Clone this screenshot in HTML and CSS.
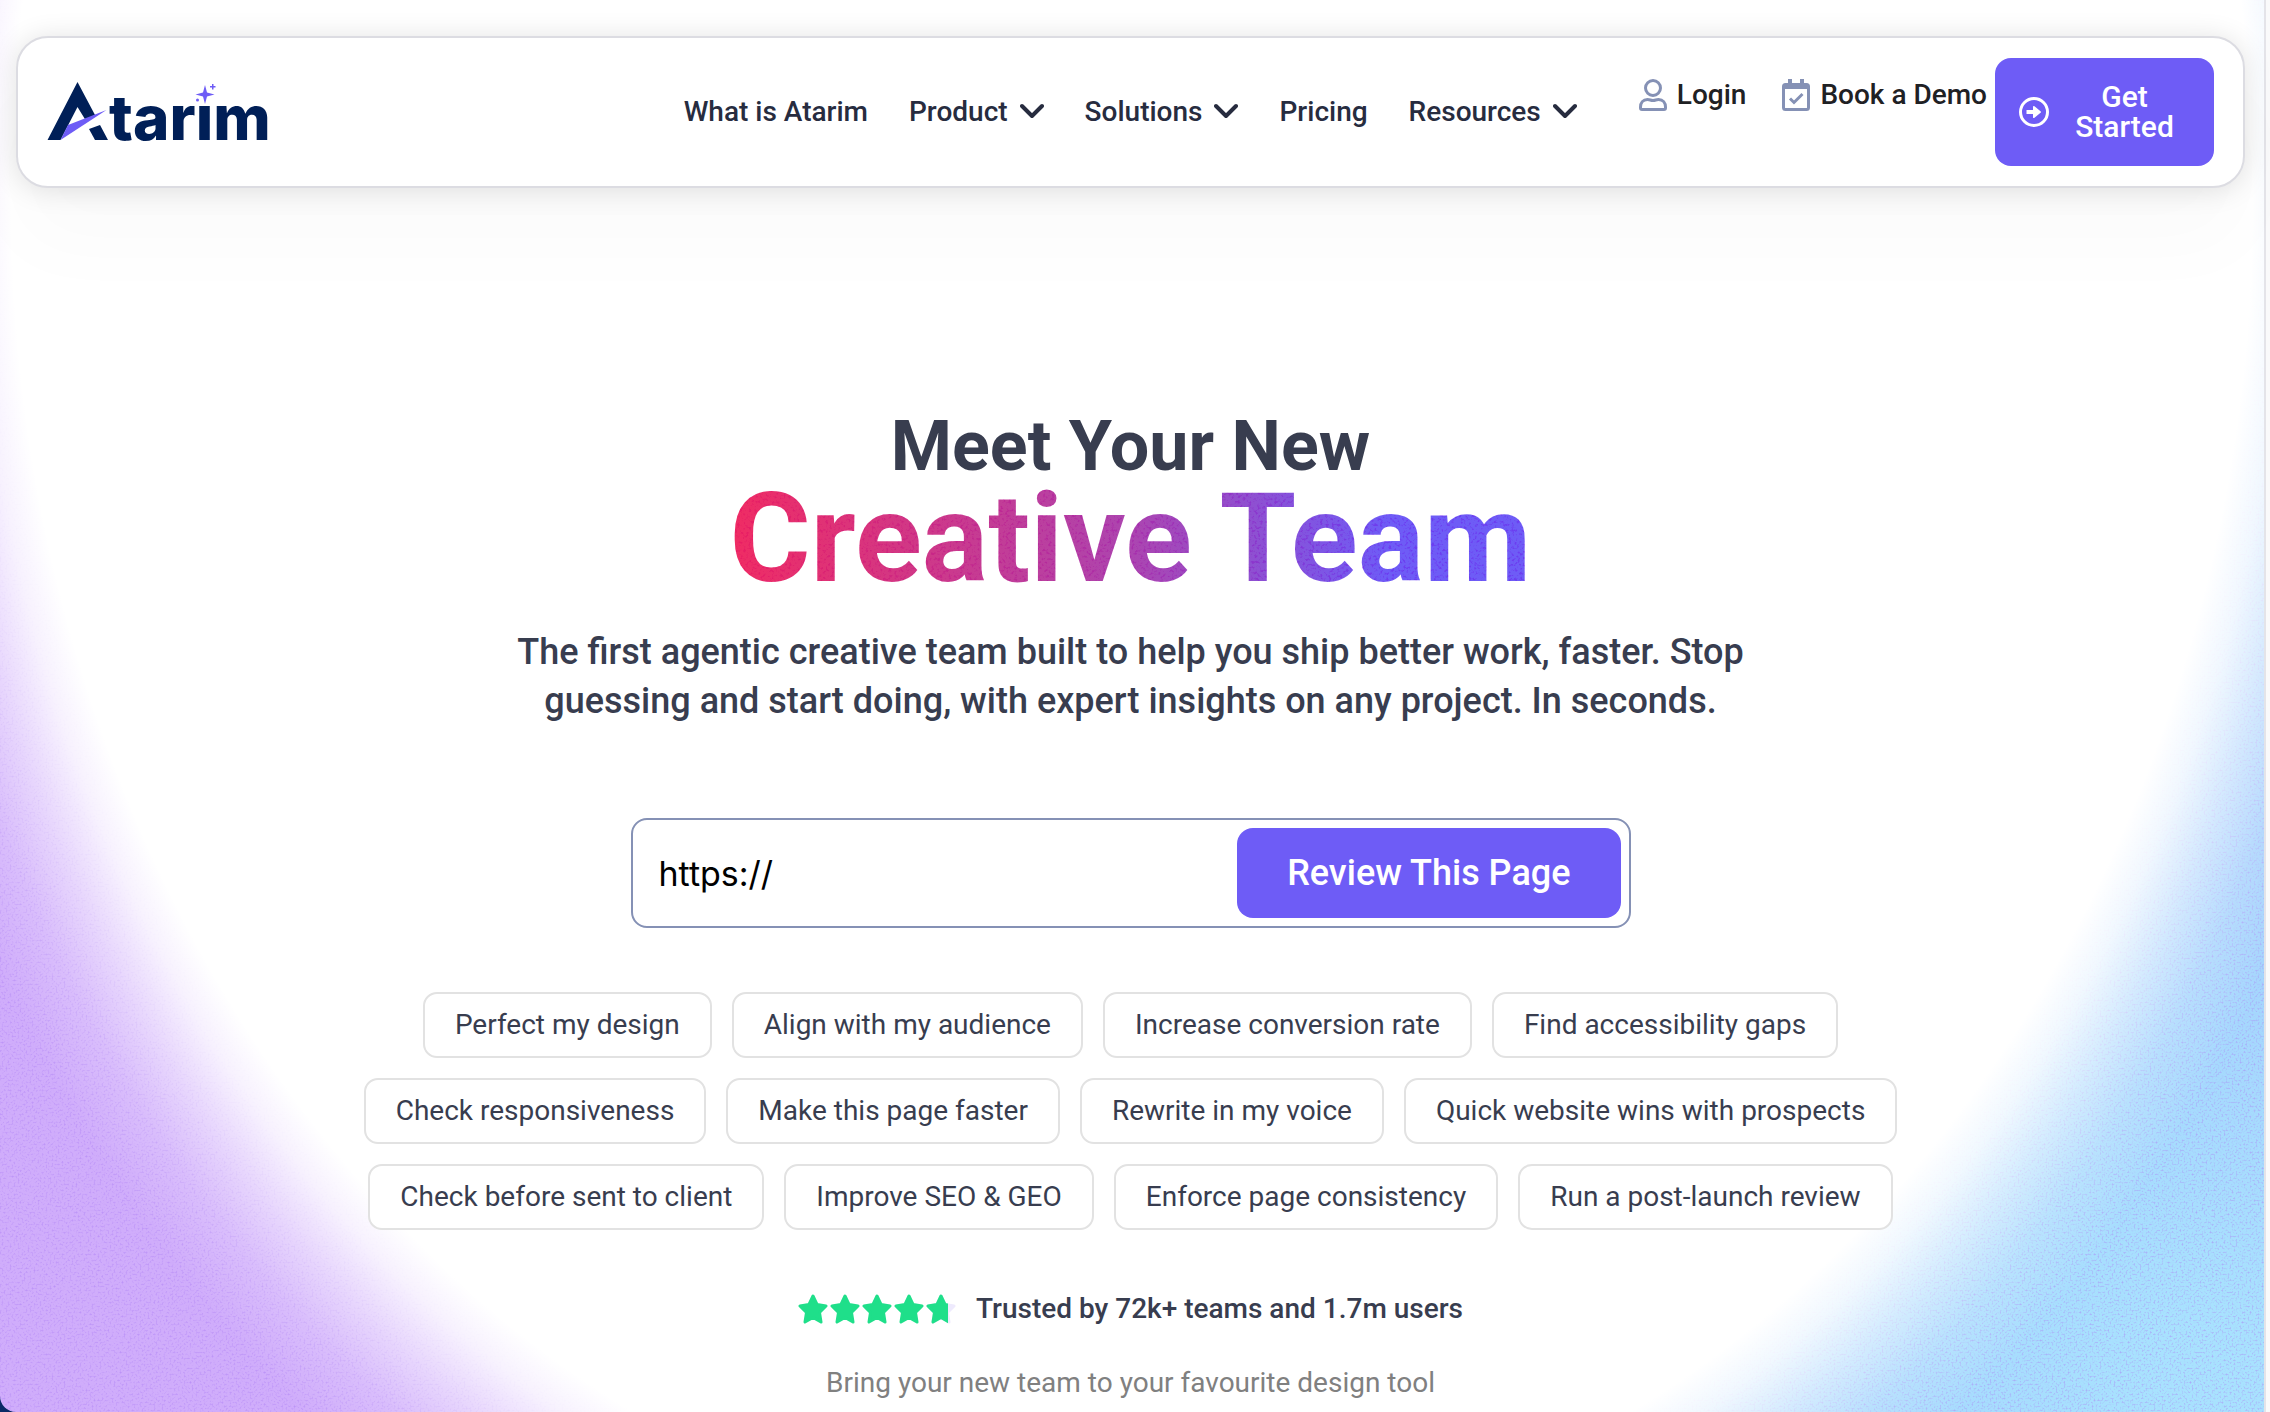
FILE: index.html
```html
<!DOCTYPE html>
<html lang="en">
<head>
  <meta charset="UTF-8" />
  <meta name="viewport" content="width=device-width, initial-scale=1.0" />
  <title>Atarim</title>
  <link rel="stylesheet" href="styles.css">
</head>
<body>
  <div class="page">

    <!-- Header -->
    <header class="header">
      <a class="logo" href="#" aria-label="Atarim">
        <svg class="logo-mark" viewBox="0 0 62 60" aria-hidden="true">
          <path fill="#001f57" d="M0.500 58 L30.500 0 L48 33 L38.500 38 L30.500 25 L13.500 58 Z" />
          <path fill="#001f57" d="M42 47 L53 43 L61 58 L48 58 Z" />
          <path fill="#6e5cf6" d="M59.500 28 L13.500 58 L21 43 Z" />
        </svg>
        <span class="logo-text">tar<span class="logo-i">ı<svg class="sparkle" viewBox="0 0 20 20" aria-hidden="true"><path fill="#6e5cf6" d="M10 1 L12 8.500 L19.500 10.500 L12 12.500 L10 20 L8 12.500 L0.500 10.500 L8 8.500 Z" /><path fill="#6e5cf6" d="M17 0h1.500v2h2v1.500h-2v2h-1.500v-2h-2v-1.500h2z" /><circle fill="#6e5cf6" cx="2.500" cy="16" r="1.500" /></svg></span>m</span>
      </a>

      <nav class="nav">
        <a href="#">What is Atarim</a>
        <a href="#">Product <svg class="chevron" viewBox="0 0 24 16"><path d="M2 3 L12 13 L22 3" /></svg></a>
        <a href="#">Solutions <svg class="chevron" viewBox="0 0 24 16"><path d="M2 3 L12 13 L22 3" /></svg></a>
        <a href="#">Pricing</a>
        <a href="#">Resources <svg class="chevron" viewBox="0 0 24 16"><path d="M2 3 L12 13 L22 3" /></svg></a>
      </nav>

      <div class="actions">
        <a class="action-link" href="#">
          <svg class="action-icon" viewBox="0 0 28 32"><circle cx="14" cy="9" r="7.500" /><path d="M8.500 20.500 C11 20.500 11.500 21.500 14 21.500 C16.500 21.500 17 20.500 19.500 20.500 C24 20.500 26.500 24 26.500 28 V29 Q26.500 30.500 25 30.500 H3 Q1.500 30.500 1.500 29 V28 C1.500 24 4 20.500 8.500 20.500 Z" /></svg>
          Login
        </a>
        <a class="action-link" href="#">
          <svg class="action-icon" viewBox="0 0 28 32"><rect x="1.500" y="5.500" width="25" height="25" rx="2" /><path d="M1.500 7.500 H26.500" stroke-width="5" /><path d="M8 0 V6 M20 0 V6" stroke-width="4" /><path d="M8 19.500 L12 23.500 L20.500 15" /></svg>
          Book a Demo
        </a>
        <button class="start-btn" type="button">
          <svg class="start-icon" viewBox="0 0 30 30"><circle cx="15" cy="15" r="13.500" fill="none" stroke="#fff" stroke-width="3" /><path fill="#fff" d="M7.500 13 H14 V9.500 Q14.500 8.500 15.500 9.200 L21.500 14.200 Q22.500 15 21.500 15.800 L15.500 20.800 Q14.500 21.500 14 20.500 V17 H7.500 Z" /></svg>
          <span>Get Started</span>
        </button>
      </div>
    </header>

    <!-- Hero -->
    <main class="hero">
      <h1 class="title">Meet Your New <span class="title-big">Creative Team</span></h1>
      <p class="subtitle">The first agentic creative team built to help you ship better work, faster. Stop guessing and start doing, with expert insights on any project. In seconds.</p>

      <form class="url-form">
        <input class="url-input" type="text" value="https://" aria-label="Page URL">
        <button class="review-btn" type="button">Review This Page</button>
      </form>

      <div class="chips">
        <div class="chip-row">
          <button class="chip" type="button">Perfect my design</button>
          <button class="chip" type="button">Align with my audience</button>
          <button class="chip" type="button">Increase conversion rate</button>
          <button class="chip" type="button">Find accessibility gaps</button>
        </div>
        <div class="chip-row">
          <button class="chip" type="button">Check responsiveness</button>
          <button class="chip" type="button">Make this page faster</button>
          <button class="chip" type="button">Rewrite in my voice</button>
          <button class="chip" type="button">Quick website wins with prospects</button>
        </div>
        <div class="chip-row">
          <button class="chip" type="button">Check before sent to client</button>
          <button class="chip" type="button">Improve SEO &amp; GEO</button>
          <button class="chip" type="button">Enforce page consistency</button>
          <button class="chip" type="button">Run a post-launch review</button>
        </div>
      </div>

      <div class="trust">
        <svg class="stars" viewBox="0 0 158 30" role="img" aria-label="4.7 out of 5 stars">
          <defs>
            <path id="star" stroke-width="3" stroke-linejoin="round" d="M15 2 L19 10.500 L28 12 L21.500 18.500 L23 28 L15 23.500 L7 28 L8.500 18.500 L2 12 L11 10.500 Z" />
            <clipPath id="part"><rect x="128" y="0" width="22" height="30" /></clipPath>
          </defs>
          <g fill="#1fdf8a" stroke="#1fdf8a">
            <use href="#star" />
            <use href="#star" x="32" />
            <use href="#star" x="64" />
            <use href="#star" x="96" />
          </g>
          <use href="#star" x="128" fill="#eeeafd" stroke="#eeeafd" />
          <g clip-path="url(#part)"><use href="#star" x="128" fill="#1fdf8a" stroke="#1fdf8a" /></g>
        </svg>
        <span>Trusted by 72k+ teams and 1.7m users</span>
      </div>

      <p class="tools-note">Bring your new team to your favourite design tool</p>
    </main>
  </div>
</body>
</html>
```

FILE: styles.css
```css
:root {
  --purple: #6e5cf6;
  --dark: #383d4f;
  --slate: #8591b5;
  --grain: url("data:image/svg+xml,%3Csvg xmlns='http://www.w3.org/2000/svg' width='400' height='400'%3E%3Cfilter id='n'%3E%3CfeTurbulence type='fractalNoise' baseFrequency='.5' numOctaves='2' stitchTiles='stitch'/%3E%3CfeColorMatrix values='0 0 0 0 .4 0 0 0 0 .2 0 0 0 0 .9 1.4 0 0 0 -.68'/%3E%3C/filter%3E%3Crect width='400' height='400' filter='url(%23n)'/%3E%3C/svg%3E");
  --grain-title: url("data:image/svg+xml,%3Csvg xmlns='http://www.w3.org/2000/svg' width='400' height='400'%3E%3Cfilter id='n'%3E%3CfeTurbulence type='fractalNoise' baseFrequency='.35' numOctaves='2' stitchTiles='stitch'/%3E%3CfeColorMatrix values='0 0 0 0 .95 0 0 0 0 .4 0 0 0 0 .95 5 0 0 0 -2.6'/%3E%3C/filter%3E%3Crect width='400' height='400' filter='url(%23n)'/%3E%3C/svg%3E");
}

* {
  box-sizing: border-box;
}

body {
  margin: 0;
  padding-right: 6px;
  font-family: Roboto, Arial, sans-serif;
  font-size: 28px;
  color: var(--dark);
  background: linear-gradient(90deg, #0a2a66 50%, #fafafb 50%);
}

.page {
  display: flow-root;
  min-height: 100vh;
  padding: 36px 19px 0 16px;
  border-bottom-left-radius: 16px;
  box-shadow: 2px 0 0 #e4e4e9;
  /* white oval on top, grain below it, colours at the bottom */
  background:
    radial-gradient(ellipse 50% 97% at 50% 14%, #fff 99%, rgba(255, 255, 255, 0.84) 102%, rgba(255, 255, 255, 0.5) 106%, rgba(255, 255, 255, 0.2) 110%, rgba(255, 255, 255, 0) 115%),
    var(--grain),
    radial-gradient(ellipse 24% 36% at 97% 97%, #a8e2fe 10%, rgba(168, 226, 254, 0)),
    linear-gradient(90deg, #d0adfb 40%, #a9c4fb 62%, #a4d2fd 75%);
}

a {
  color: inherit;
  text-decoration: none;
}

button {
  font-family: inherit;
  cursor: pointer;
}

/* Header */
.header {
  display: flex;
  align-items: center;
  min-height: 151px;
  padding: 20px 29px;
  background: #fff;
  border: 2px solid #dcdce2;
  border-radius: 32px;
  box-shadow: 0 2px 28px rgba(0, 0, 0, 0.12), 0 60px 80px rgba(0, 0, 0, 0.02);
}

.logo {
  display: flex;
  align-items: flex-end;
  color: #001f57;
}

.logo-mark {
  width: 62px;
  height: 60px;
}

.logo-text {
  font-family: Inter, sans-serif;
  font-size: 62px;
  font-weight: 800;
  line-height: 48px;
}

.logo-i {
  position: relative;
}

.sparkle {
  position: absolute;
  left: -1px;
  top: 4px;
  width: 20px;
  height: 20px;
  overflow: visible;
}

.nav {
  display: flex;
  gap: 41px;
  margin-left: auto;
  padding-bottom: 2px;
  font-weight: 500;
  color: #272c3f;
}

.nav a {
  display: flex;
  align-items: center;
  gap: 12px;
}

.chevron {
  width: 24px;
  height: 16px;
  fill: none;
  stroke: currentColor;
  stroke-width: 4;
  stroke-linecap: round;
  stroke-linejoin: round;
}

.actions {
  display: flex;
  align-items: flex-start;
  margin-left: 62px;
  font-weight: 500;
  color: #1f2124;
}

.action-link {
  display: flex;
  align-items: center;
  gap: 10px;
  margin-top: 20px;
  margin-right: 36px;
}

.action-link:nth-child(2) {
  margin-right: 8px;
}

.action-icon {
  width: 28px;
  height: 32px;
  fill: none;
  stroke: var(--slate);
  stroke-width: 3;
}

.start-btn {
  display: flex;
  align-items: center;
  gap: 10px;
  width: 219px;
  min-height: 108px;
  padding: 24px;
  color: #fff;
  background: var(--purple);
  border: none;
  border-radius: 16px;
  font-size: 30px;
  font-weight: 500;
  line-height: 30px;
}

.start-btn span {
  flex: 1;
}

.start-icon {
  flex: none;
  width: 30px;
  height: 30px;
}

/* Hero */
.hero {
  display: flex;
  flex-direction: column;
  align-items: center;
  padding-top: 220px;
  text-align: center;
}

.title {
  margin: 0;
  font-size: 70px;
  font-weight: 700;
  line-height: 76px;
}

.title-big {
  display: block;
  font-size: 124px;
  line-height: 110px;
  color: transparent;
  background: var(--grain-title), linear-gradient(90deg, #f02c63, #ac45b0 50%, #6e5cf6 82%);
  background-blend-mode: multiply;
  -webkit-background-clip: text;
  background-clip: text;
}

.subtitle {
  max-width: 1280px;
  margin: 34px 0 0;
  font-size: 36px;
  font-weight: 500;
  line-height: 49px;
}

.url-form {
  display: flex;
  width: 100%;
  max-width: 1000px;
  margin-top: 92px;
  padding: 8px;
  background: #fff;
  border: 2px solid var(--slate);
  border-radius: 16px;
}

.url-input {
  flex: 1;
  min-width: 0;
  padding: 0 18px;
  border: none;
  outline: none;
  background: none;
  color: #000;
  font-family: Inter, sans-serif;
  font-size: 34px;
}

.review-btn {
  padding: 24px 50px;
  color: #fff;
  background: var(--purple);
  border: none;
  border-radius: 16px;
  font-size: 36px;
  font-weight: 500;
  line-height: 42px;
}

.chips {
  display: flex;
  flex-direction: column;
  gap: 20px;
  margin-top: 64px;
}

.chip-row {
  display: flex;
  flex-wrap: wrap;
  justify-content: center;
  gap: 20px;
}

.chip {
  padding: 15px 30px;
  color: var(--dark);
  background: #fff;
  border: 2px solid #e2e2e2;
  border-radius: 14px;
  font-size: 28px;
  line-height: 32px;
}

.trust {
  display: flex;
  align-items: center;
  gap: 20px;
  margin-top: 62px;
  font-weight: 500;
  line-height: 34px;
}

.stars {
  width: 158px;
  height: 30px;
}

.tools-note {
  margin: 40px 0 0;
  color: #808080;
  line-height: 34px;
}
```
